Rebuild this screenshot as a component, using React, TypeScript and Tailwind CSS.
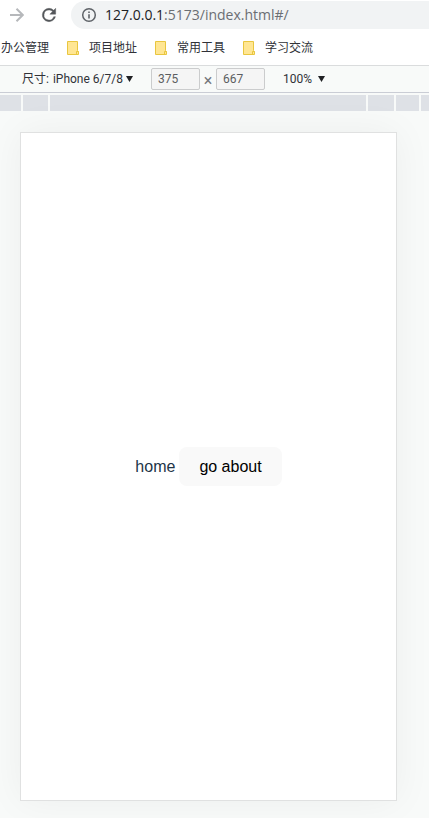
import React from "react";

const bookmarks = ["办公管理", "项目地址", "常用工具", "学习交流"];

function FolderIcon() {
  return (
    <svg className="h-4 w-3 shrink-0" viewBox="0 0 12 16" fill="none" aria-hidden="true">
      <path d="M0.5 1.5H10.5V10.5L11.5 11.5V14.5H0.5Z" fill="#ffe693" stroke="#e9c63f" />
      <path d="M9.5 14.5V11.5H11.5" stroke="#e9c63f" />
    </svg>
  );
}

function AddressBar() {
  return (
    <div className="flex h-7 items-center">
      <button type="button" aria-label="前进" className="ml-2 flex size-4 items-center justify-center">
        <svg className="size-4" viewBox="0 0 16 16" fill="none" stroke="#b6b8bb" strokeWidth="2" aria-hidden="true">
          <path d="M2 8H15M8.5 1.7L14.8 8L8.5 14.3" />
        </svg>
      </button>
      <button type="button" aria-label="重新加载" className="ml-[15px] flex size-5 items-center justify-center">
        <svg className="size-5" viewBox="0 0 24 24" fill="#54575b" aria-hidden="true">
          <path d="M17.65 6.35A7.96 7.96 0 0 0 12 4a8 8 0 1 0 7.73 10h-2.08A6 6 0 1 1 12 6c1.66 0 3.14.69 4.22 1.78L13 11h7V4z" stroke="#54575b" strokeWidth="0.5" />
        </svg>
      </button>
      <div className="ml-3 flex h-7 min-w-0 flex-1 items-center rounded-l-full bg-[#f1f3f4] pl-2.5">
        <svg className="size-4 shrink-0" viewBox="0 0 16 16" fill="none" stroke="#5f6368" aria-hidden="true">
          <circle cx="8" cy="8" r="6.3" strokeWidth="1.5" />
          <path d="M8 7.2V11.5M8 4.5V6" strokeWidth="1.6" />
        </svg>
        <a href="#/" className="ml-2 font-['Open_Sans',sans-serif] text-sm leading-5 whitespace-nowrap text-[#6b6e73]">
          <span className="text-[#202124]">127.0.0.1</span>:5173/index.html#/
        </a>
      </div>
    </div>
  );
}

function Bookmarks() {
  return (
    <nav className="flex h-9 items-center gap-4.5 overflow-hidden pt-px pl-px text-xs text-[#303238]">
      {bookmarks.map((name, index) => (
        <a key={name} href="#/" className="flex shrink-0 items-center gap-2.5 whitespace-nowrap">
          {index > 0 && <FolderIcon />}
          {name}
        </a>
      ))}
    </nav>
  );
}

function DeviceToolbar() {
  const field = "h-[22px] w-[49px] rounded-xs border border-[#cbcccd] bg-[#f5f5f5] pl-1.5 text-xs text-[#5c5e61]";
  return (
    <div className="flex h-7 items-center border-y border-t-[#dadcdd] border-b-[#cacdd5] bg-[#f8faf9] pl-5.5 font-['Roboto','Noto_Sans_CJK_SC',sans-serif] text-xs text-[#303238]">
      <label htmlFor="device" className="whitespace-nowrap">尺寸:</label>
      <select id="device" className="ml-1 w-[73px] appearance-none bg-transparent">
        <option>iPhone 6/7/8</option>
      </select>
      <Arrow />
      <input aria-label="宽度" defaultValue="375" className={`ml-4.5 ${field}`} />
      <span className="w-4 pt-1 text-center text-base leading-5 text-[#74777c]">×</span>
      <input aria-label="高度" defaultValue="667" className={field} />
      <select aria-label="缩放" className="ml-4.5 w-[35px] appearance-none bg-transparent">
        <option>100%</option>
      </select>
      <Arrow />
    </div>
  );
}

function Arrow() {
  return (
    <svg className="h-1.5 w-[7px] shrink-0" viewBox="0 0 7 6" fill="#202124" aria-hidden="true">
      <path d="M0 0H7L3.5 6Z" />
    </svg>
  );
}

function Ruler() {
  const bar = "bg-[#dee1e6]";
  return (
    <div className="mt-0.5 flex h-4 gap-0.5">
      <div className={`w-[21px] ${bar}`} />
      <div className={`w-[25px] ${bar}`} />
      <div className={`flex-1 ${bar}`} />
      <div className={`w-[26px] ${bar}`} />
      <div className={`w-[23px] ${bar}`} />
      <div className={`w-2 ${bar}`} />
    </div>
  );
}

export default function App() {
  return (
    <div className="flex min-h-screen flex-col overflow-hidden bg-white pt-px font-['Open_Sans','Noto_Sans_CJK_SC',sans-serif]">
      <AddressBar />
      <Bookmarks />
      <DeviceToolbar />
      <div className="flex flex-1 flex-col bg-[#f8faf9]">
        <Ruler />
        <main className="mt-[21px] mr-8 mb-[17px] ml-5 flex flex-1 items-center justify-center gap-1 border border-[#e0e1e1] bg-white font-['Liberation_Sans',Arial,sans-serif] text-base text-[#213547] shadow-[0_0_36px_rgba(0,0,0,0.05)]">
          <span>home</span>
          <button type="button" className="rounded-lg bg-[#f9f9f9] px-5 py-2 leading-[23px] font-medium text-black">
            go about
          </button>
        </main>
      </div>
    </div>
  );
}
